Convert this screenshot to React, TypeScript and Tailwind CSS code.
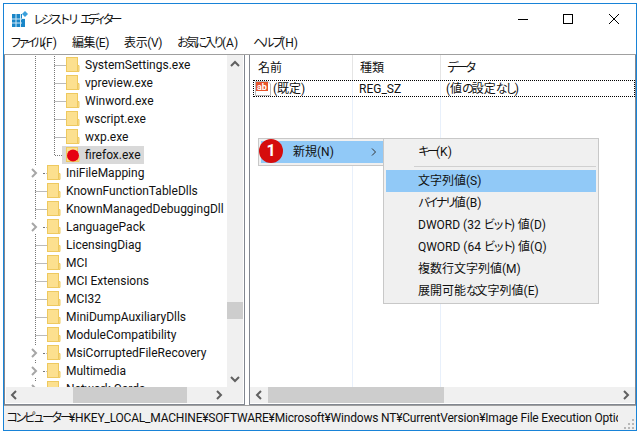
const jpFont = "font-['Roboto','Noto_Sans_CJK_JP',sans-serif]";

const deepRows = ["SystemSettings.exe", "vpreview.exe", "Winword.exe", "wscript.exe", "wxp.exe"];
const shallowRows: [string, boolean][] = [
  ["IniFileMapping", true],
  ["KnownFunctionTableDlls", false],
  ["KnownManagedDebuggingDll", false],
  ["LanguagePack", true],
  ["LicensingDiag", false],
  ["MCI", false],
  ["MCI Extensions", false],
  ["MCI32", false],
  ["MiniDumpAuxiliaryDlls", false],
  ["ModuleCompatibility", false],
  ["MsiCorruptedFileRecovery", true],
  ["Multimedia", true],
  ["Network Cards", true],
];
const subItems = ["文字列値(S)", "バイナリ値(B)", "DWORD (32 ビット) 値(D)", "QWORD (64 ビット) 値(Q)", "複数行文字列値(M)", "展開可能な文字列値(E)"];

// the kana in the original UI font are much narrower than the CJK fallback
function Jp({ t }: { t: string }) {
  const parts = t.split(/([ぁ-んァ-ヶー]+)/);
  return (
    <>
      {parts.map((p, i) =>
        i % 2 === 1 ? (
          <span key={i} className={/[ぁ-ん]/.test(p) ? "tracking-[-2.5px]" : "tracking-[-3px]"}>{p}</span>
        ) : (
          <span key={i}>{p}</span>
        )
      )}
    </>
  );
}

function Folder({ dot }: { dot?: boolean }) {
  return (
    <svg width="14" height="16" viewBox="0 0 14 16" className="shrink-0">
      <rect x="0.5" y="0.5" width="11" height="14" fill="#fce08f" stroke="#eec95f" />
      <path d="M11.5 8.5h1.500v6h-1.500z" fill="#fce08f" stroke="#eec95f" />
      {dot && <circle cx="7" cy="8.5" r="6" fill="#e60012" />}
    </svg>
  );
}

function Chevron({ dir, color = "#a6a6a6" }: { dir: "l" | "r" | "u" | "d"; color?: string }) {
  const d = { l: "M7 2L3 6l4 4", r: "M4 2l4 4-4 4", u: "M2 8l4-4 4 4", d: "M2 4l4 4 4-4" }[dir];
  return (
    <svg width="12" height="12" viewBox="0 0 12 12" className="shrink-0">
      <path d={d} fill="none" stroke={color} strokeWidth="2" />
    </svg>
  );
}

// dotted tree connectors, drawn per row
function Gutter({ deep, last, expander }: { deep: boolean; last?: boolean; expander?: boolean }) {
  return (
    <svg width="61" height="18" viewBox="0 0 61 18" className="shrink-0">
      <path d="M30.5 0V18" stroke="#777" strokeDasharray="1 1" fill="none" />
      {deep && <path d={last ? "M49.5 0V9.5H61" : "M49.5 0V18M49.5 9.5H61"} stroke="#777" strokeDasharray="1 1" fill="none" />}
      {!deep && <path d="M30.5 9.5H42" stroke="#777" strokeDasharray="1 1" fill="none" />}
      {expander && (
        <>
          <rect x="24" y="2" width="17" height="14" fill="#fff" />
          <path d="M27 5l4 4-4 4" fill="none" stroke="#a6a6a6" strokeWidth="2" />
          <path d="M38 9.5H40" stroke="#777" fill="none" />
        </>
      )}
    </svg>
  );
}

export default function App() {
  return (
    <div className={`w-[640px] h-[436px] bg-white pt-[3px] pl-[3px] text-[12px] text-[#111] ${jpFont}`}>
      <div className="w-[634px] h-[428px] border border-[#1883d7] flex flex-col bg-white">
        {/* Title bar */}
        <div className="h-[28px] flex items-center shrink-0">
          <svg width="16" height="16" viewBox="0 0 16 16" className="ml-[8px] mr-[5px] mt-[2px]">
            <path d="M0 3h10v13H0z" fill="#1a86c8" />
            <path d="M0 8h13M0 12h13M4 3v13M8.500 3v13" stroke="#cfe8f7" />
            <path d="M10 8h3v8h-3z" fill="#1a86c8" />
            <path d="M13 0l3 3-3 3-3-3z" fill="#3aa0dc" />
          </svg>
          <span className="mt-[3px] tracking-[-3.4px]">レジストリ</span>
          <span className="mt-[3px] ml-[4px] tracking-[-4.2px]">エディター</span>
          <div className="ml-auto flex items-center mr-[7px] mt-[2px]">
            <svg width="46" height="12" viewBox="0 0 46 12">
              <path d="M11 6.500H21" stroke="#000" />
            </svg>
            <svg width="46" height="12" viewBox="0 0 46 12">
              <rect x="10.500" y="1.500" width="9" height="9" fill="none" stroke="#000" />
            </svg>
            <svg width="30" height="12" viewBox="0 0 30 12">
              <path d="M10 1l10 10M20 1L10 11" stroke="#000" />
            </svg>
          </div>
        </div>
        {/* Menu bar */}
        <div className="h-[22px] flex items-center shrink-0 pl-[6px] gap-[15px]">
          <span><span className="tracking-[-4px]">ファイル</span>(F)</span>
          <span className="tracking-[-0.4px]">編集(E)</span>
          <span className="tracking-[-0.4px]">表示(V)</span>
          <span><span className="tracking-[-3px]">お気に入り</span>(A)</span>
          <span><span className="tracking-[-2.7px]">ヘルプ</span>(H)</span>
        </div>
        {/* Panes */}
        <div className="h-[351px] flex shrink-0 gap-[4px] border-t border-[#a0a0a0] relative">
          <div className="w-[241px] border-x border-b border-[#828790] flex flex-col px-px pb-px">
            <div className="flex-1 flex min-h-0">
              <div className="flex-1 overflow-hidden pt-[1px] -ml-px">
                {deepRows.map((name) => (
                  <div key={name} className="h-[18px] flex items-center">
                    <Gutter deep />
                    <Folder />
                    <span className="ml-[5px] whitespace-nowrap">{name}</span>
                  </div>
                ))}
                <div className="h-[18px] flex items-center">
                  <Gutter deep last />
                  <div className="flex items-center bg-[#d9d9d9] h-[18px] pr-[3px] -ml-[4px] pl-[4px]">
                    <Folder dot />
                    <span className="ml-[5px]">firefox.exe</span>
                  </div>
                </div>
                {shallowRows.map(([name, exp]) => (
                  <div key={name} className="h-[18px] flex items-center">
                    <div className="w-[42px] overflow-hidden shrink-0 flex">
                      <Gutter deep={false} expander={exp} />
                    </div>
                    <Folder />
                    <span className="ml-[5px] whitespace-nowrap">{name}</span>
                  </div>
                ))}
              </div>
              <div className="w-[16px] bg-[#f0f0f0] flex flex-col items-center shrink-0">
                <div className="h-[17px] flex items-center justify-center"><Chevron dir="u" color="#606060" /></div>
                <div className="w-full h-[17px] bg-[#cdcdcd] mt-[230px]" />
                <div className="flex-1" />
                <div className="h-[17px] flex items-center justify-center"><Chevron dir="d" color="#606060" /></div>
              </div>
            </div>
            <div className="h-[16px] bg-[#f0f0f0] flex items-center shrink-0">
              <div className="w-[17px] flex justify-center"><Chevron dir="l" color="#606060" /></div>
              <div className="w-[114px] h-full bg-[#cdcdcd] ml-[50px]" />
              <div className="w-[17px] flex justify-center ml-[23px]"><Chevron dir="r" color="#606060" /></div>
            </div>
          </div>
          <div className="flex-1 border-x border-b border-[#828790] flex flex-col">
            <div className="flex-1 min-h-0 flex flex-col">
              <div className="h-[25px] flex items-center shrink-0">
                <span className="w-[103px] pl-[8px] border-r border-[#e5e5e5] h-full flex items-center">名前</span>
                <span className="w-[88px] pl-[7px] border-r border-[#e5e5e5] h-full flex items-center">種類</span>
                <span className="pl-[6px]"><Jp t="データ" /></span>
              </div>
              <div className="relative flex-1">
                <div className="absolute inset-y-0 left-[102px] w-px bg-[#e8f0fb]" />
                <div className="absolute inset-y-0 left-[190px] w-px bg-[#e8f0fb]" />
                <div className="relative h-[17px] flex items-center border border-dotted border-black ml-[3px]">
                  <svg width="16" height="15" viewBox="0 0 16 15" className="ml-[1px] shrink-0">
                    <path d="M0.500 0.500H13L15.500 3V14.500H0.500z" fill="#fff" stroke="#bbb" />
                    <rect x="1" y="1" width="12" height="9" fill="#e8542a" />
                    <text x="7" y="8.500" textAnchor="middle" fontSize="9" fontWeight="700" fill="#fff">ab</text>
                  </svg>
                  <span className="ml-[2px] w-[86px]">(既定)</span>
                  <span className="w-[87px]">REG_SZ</span>
                  <span><Jp t="(値の設定なし)" /></span>
                </div>
              </div>
            </div>
            <div className="h-[16px] bg-[#f0f0f0] flex items-center shrink-0 mb-px">
              <div className="w-[17px] flex justify-center ml-[1px]"><Chevron dir="l" color="#606060" /></div>
              <div className="w-[176px] h-full bg-[#cdcdcd]" />
              <div className="flex-1" />
              <div className="w-[17px] flex justify-center mr-[1px]"><Chevron dir="r" color="#606060" /></div>
            </div>
          </div>
          {/* Context menu */}
          <div className="absolute left-[254px] top-[83px] w-[127px] h-[28px] bg-[#f0f0f0] border border-[#c8c8c8] p-[2px] pr-0">
            <div className="h-full bg-[#91c9f7] flex items-center pl-[32px] pr-[7px]">
              <span>新規(N)</span>
              <svg width="6" height="8" viewBox="0 0 6 8" className="ml-auto"><path d="M1 0.500l3.500 3.500-3.500 3.500" fill="none" stroke="#333" /></svg>
            </div>
          </div>
          <div className="absolute left-[255px] top-[84px] w-[24px] h-[24px] rounded-full bg-[#d50c0c] text-white flex items-center justify-center font-bold text-[16px]">1</div>
          {/* Submenu */}
          <div className="absolute left-[379px] top-[83px] w-[216px] bg-[#f0f0f0] border border-[#c8c8c8] pt-[2px] px-[2px] pb-px">
            <div className="h-[22px] flex items-center pl-[32px]"><Jp t="キー(K)" /></div>
            <div className="h-px bg-[#d0d0d0] ml-[28px] my-[3px]" />
            {subItems.map((item, i) => (
              <div key={item} className={`h-[22px] flex items-center pl-[32px] whitespace-pre ${i === 0 ? "bg-[#91c9f7]" : ""}`}><Jp t={item} /></div>
            ))}
          </div>
        </div>
        {/* Status bar */}
        <div className="flex-1 bg-[#f0f0f0] border-t border-[#a0a0a0] flex items-center pl-[2px] relative overflow-hidden">
          <span className="w-[612px] overflow-hidden whitespace-nowrap tracking-[-0.2px]"><Jp t="コンピューター¥HKEY_LOCAL_MACHINE¥SOFTWARE¥Microsoft¥Windows NT¥CurrentVersion¥Image File Execution Options" /></span>
          <svg width="11" height="11" viewBox="0 0 11 11" className="absolute right-[1px] bottom-[1px]">
            <path d="M8 1h2v2H8zM4 5h2v2H4zM8 5h2v2H8zM0 9h2v2H0zM4 9h2v2H4zM8 9h2v2H8z" fill="#b8b8b8" />
          </svg>
        </div>
      </div>
    </div>
  );
}
